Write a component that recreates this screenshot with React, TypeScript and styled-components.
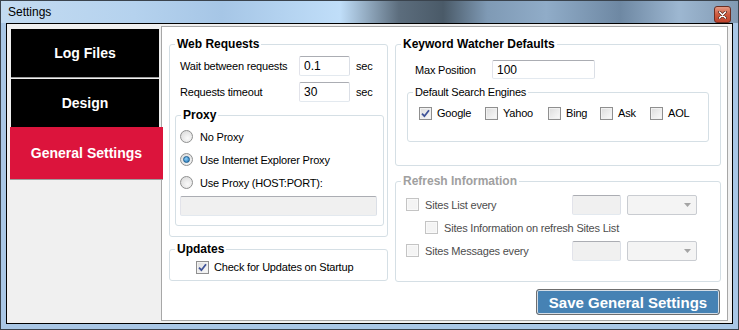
import React from "react";
import styled, { createGlobalStyle } from "styled-components";

const GlobalStyle = createGlobalStyle`
  body {
    margin: 0;
    background: #ffffff;
    font-family: "Liberation Sans", Arial, sans-serif;
  }
`;

const Window = styled.div`
  width: 739px;
  height: 330px;
  box-sizing: border-box;
  border: 1px solid #3a434d;
  background: #a9c7e6;
  padding: 0 5px 5px;
  display: flex;
  flex-direction: column;
`;

const TitleBar = styled.div`
  height: 22px;
  margin: 0 -5px;
  padding: 0 7px 0 7px;
  display: flex;
  align-items: center;
  justify-content: space-between;
  background: linear-gradient(
    90deg,
    #c3dbf1 0%,
    #b5d2ee 18%,
    #a6c6e6 30%,
    #c0def9 46%,
    #5c6d7d 54%,
    #4a5a68 60%,
    #7f9ab5 66%,
    #90acc8 74%,
    #6e88a3 84%,
    #9db7d1 92%,
    #8199b2 100%
  );
`;

const Title = styled.span`
  font-size: 12px;
  color: #000;
`;

const CloseButton = styled.div`
  width: 15px;
  height: 15px;
  align-self: flex-start;
  margin-top: 5px;
  border: 1px solid #6b2e22;
  border-radius: 3px;
  background: linear-gradient(#e59a85, #cf5a3f 50%, #c0412a);
  display: flex;
  align-items: center;
  justify-content: center;
`;

const Inner = styled.div`
  flex: 1;
  border: 1px solid #000;
  background: #f0f0f0;
  display: flex;
`;

const Nav = styled.div`
  width: 154px;
  padding-top: 5px;
  display: flex;
  flex-direction: column;
`;

const Tab = styled.div<{ $active?: boolean }>`
  position: relative;
  z-index: 1;
  margin-left: ${(p) => (p.$active ? 3 : 4)}px;
  margin-top: ${(p) => (p.$active ? -2 : 0)}px;
  width: ${(p) => (p.$active ? 153 : 148)}px;
  height: ${(p) => (p.$active ? 52 : 48)}px;
  margin-bottom: 1px;
  border-bottom: 1px solid #9d9d9d;
  background: ${(p) => (p.$active ? "#dc143c" : "#000")};
  color: #fff;
  font-weight: bold;
  font-size: 14px;
  display: flex;
  align-items: center;
  justify-content: center;
`;

const Panel = styled.div`
  margin: 2px 4px 2px 0;
  border: 1px solid #a7a7a7;
  background: #fff;
  padding: 10px 6px 0 7px;
  display: flex;
  gap: 7px;
`;

const Column = styled.div<{ $w: number }>`
  width: ${(p) => p.$w}px;
  display: flex;
  flex-direction: column;
`;

const GroupBox = styled.fieldset<{
  $h: number;
  $w?: number;
  $top?: number;
  $margin?: string;
}>`
  margin: ${(p) => p.$margin ?? "0"};
  padding: ${(p) => p.$top ?? 0}px 0 0 0;
  height: ${(p) => p.$h}px;
  width: ${(p) => (p.$w ? `${p.$w}px` : "auto")};
  box-sizing: border-box;
  min-width: 0;
  border: 1px solid #d5dfe5;
  border-radius: 3px;
`;

const Legend = styled.legend<{ $plain?: boolean; $disabled?: boolean }>`
  margin-left: 5px;
  padding: 0 2px;
  line-height: 14px;
  font-size: ${(p) => (p.$plain ? 11 : 12)}px;
  font-weight: ${(p) => (p.$plain ? "normal" : "bold")};
  letter-spacing: ${(p) => (p.$plain ? -0.2 : 0)}px;
  color: ${(p) => (p.$disabled ? "#a0a0a0" : "#000")};
`;

const FieldRow = styled.div<{ $h?: number; $mt?: number; $ml?: number; $pr?: number }>`
  height: ${(p) => p.$h ?? 20}px;
  margin-top: ${(p) => p.$mt ?? 0}px;
  padding-left: ${(p) => p.$ml ?? 0}px;
  padding-right: ${(p) => p.$pr ?? 0}px;
  display: flex;
  align-items: center;
  font-size: 11px;
  letter-spacing: -0.2px;
  color: #000;
`;

const Label = styled.span<{ $w?: number; $disabled?: boolean }>`
  width: ${(p) => (p.$w ? `${p.$w}px` : "auto")};
  flex: ${(p) => (p.$w ? "none" : "1")};
  color: ${(p) => (p.$disabled ? "#4d4d4d" : "#000")};
  white-space: nowrap;
`;

const TextBox = styled.input<{ $w: number; $h?: number }>`
  width: ${(p) => p.$w}px;
  height: ${(p) => p.$h ?? 20}px;
  box-sizing: border-box;
  margin: 0;
  padding: 0 4px;
  border: 1px solid;
  border-color: #abadb3 #dbdfe6 #e3e9ef #e2e3ea;
  border-radius: 2px;
  font-family: "Liberation Sans", Arial, sans-serif;
  font-size: 12px;
  color: #000;
  background: ${(p) => (p.disabled ? "#f0f0f0" : "#fff")};
  outline: none;
`;

const Unit = styled.span`
  margin-left: 6px;
`;

const Combo = styled.div`
  width: 70px;
  height: 20px;
  box-sizing: border-box;
  margin-left: 6px;
  border: 1px solid #c9ccd1;
  border-radius: 2px;
  background: #f4f4f4;
  display: flex;
  align-items: center;
  justify-content: flex-end;
  padding-right: 5px;
`;

const Radio = styled.span<{ $checked?: boolean }>`
  width: 13px;
  height: 13px;
  box-sizing: border-box;
  border-radius: 50%;
  border: 1px solid #8f9090;
  background: radial-gradient(circle at 60% 65%, #fafafa, #d6d6d6);
  display: flex;
  align-items: center;
  justify-content: center;
  margin-right: 7px;
  flex: none;
  &::after {
    content: "";
    display: ${(p) => (p.$checked ? "block" : "none")};
    width: 5px;
    height: 5px;
    border-radius: 50%;
    border: 1px solid #1c5d8f;
    background: radial-gradient(circle at 40% 35%, #8fd1fb, #1a6fb0);
  }
`;

const Check = styled.span<{ $disabled?: boolean; $gap?: number }>`
  width: 13px;
  height: 13px;
  box-sizing: border-box;
  border: 1px solid ${(p) => (p.$disabled ? "#c4c4c4" : "#8f8f8f")};
  background: ${(p) =>
    p.$disabled ? "#f4f4f4" : "linear-gradient(135deg, #dcdcdc, #fbfbfb)"};
  box-shadow: inset 0 0 0 1px ${(p) => (p.$disabled ? "#f9f9f9" : "#f1f1f1")};
  margin-right: ${(p) => p.$gap ?? 6}px;
  flex: none;
  display: flex;
  align-items: center;
  justify-content: center;
`;

const Engines = styled.div`
  padding: 4px 0 0 11px;
  display: flex;
`;

const Engine = styled.div<{ $w: number }>`
  width: ${(p) => p.$w}px;
  height: 20px;
  display: flex;
  align-items: center;
  font-size: 11px;
  letter-spacing: -0.2px;
`;

const SaveButton = styled.button`
  align-self: flex-end;
  margin: 7px 1px 0 0;
  width: 184px;
  height: 26px;
  box-sizing: border-box;
  border: 1px solid #6e6e6e;
  border-radius: 3px;
  background: #4682b4;
  box-shadow: inset 0 0 0 1px #d4dde6;
  color: #fff;
  font-family: "Liberation Sans", Arial, sans-serif;
  font-weight: bold;
  font-size: 15px;
  padding: 0;
`;

const CheckMark = () => (
  <svg width="9" height="9" viewBox="0 0 9 9">
    <path d="M1 4.6 L3.4 7.2 L8 1.2" fill="none" stroke="#3f5398" strokeWidth="1.8" />
  </svg>
);

const CloseGlyph = () => (
  <svg width="9" height="8" viewBox="0 0 9 8">
    <path d="M1.5 1 L7.5 7 M7.5 1 L1.5 7" stroke="#5a2318" strokeWidth="3" strokeLinecap="round" />
    <path d="M1.5 1 L7.5 7 M7.5 1 L1.5 7" stroke="#ffffff" strokeWidth="1.6" strokeLinecap="round" />
  </svg>
);

const ComboArrow = () => (
  <svg width="7" height="4" viewBox="0 0 7 4">
    <path d="M0 0 H7 L3.5 4 Z" fill="#a4a4a4" />
  </svg>
);

const engines = [
  { name: "Google", w: 66, checked: true },
  { name: "Yahoo", w: 63 },
  { name: "Bing", w: 52 },
  { name: "Ask", w: 50 },
  { name: "AOL", w: 50 },
];

const App = () => {
  return (
    <>
      <GlobalStyle />
      <Window>
        <TitleBar>
          <Title>Settings</Title>
          <CloseButton>
            <CloseGlyph />
          </CloseButton>
        </TitleBar>
        <Inner>
          <Nav>
            <Tab>Log Files</Tab>
            <Tab>Design</Tab>
            <Tab $active>General Settings</Tab>
          </Nav>
          <Panel>
            <Column $w={219}>
              <GroupBox $h={200} $top={5}>
                <Legend>Web Requests</Legend>
                <FieldRow $ml={10}>
                  <Label $w={119}>Wait between requests</Label>
                  <TextBox $w={51} defaultValue="0.1" readOnly />
                  <Unit>sec</Unit>
                </FieldRow>
                <FieldRow $ml={10} $mt={6}>
                  <Label $w={119}>Requests timeout</Label>
                  <TextBox $w={51} defaultValue="30" readOnly />
                  <Unit>sec</Unit>
                </FieldRow>
                <GroupBox $h={118} $w={209} $top={3} $margin="6px 0 0 5px">
                  <Legend>Proxy</Legend>
                  <FieldRow $h={23} $ml={4}>
                    <Radio />
                    <Label>No Proxy</Label>
                  </FieldRow>
                  <FieldRow $h={23} $ml={4}>
                    <Radio $checked />
                    <Label>Use Internet Explorer Proxy</Label>
                  </FieldRow>
                  <FieldRow $h={23} $ml={4}>
                    <Radio />
                    <Label>Use Proxy (HOST:PORT):</Label>
                  </FieldRow>
                  <FieldRow $ml={4} $mt={2}>
                    <TextBox $w={197} disabled />
                  </FieldRow>
                </GroupBox>
              </GroupBox>
              <GroupBox $h={39} $top={1} $margin="5px 0 0 0">
                <Legend>Updates</Legend>
                <FieldRow $ml={26}>
                  <Check $gap={5}>
                    <CheckMark />
                  </Check>
                  <Label>Check for Updates on Startup</Label>
                </FieldRow>
              </GroupBox>
            </Column>

            <Column $w={326}>
              <GroupBox $h={129} $top={9}>
                <Legend>Keyword Watcher Defaults</Legend>
                <FieldRow $h={19} $ml={19}>
                  <Label $w={77}>Max Position</Label>
                  <TextBox $w={103} $h={19} defaultValue="100" readOnly />
                </FieldRow>
                <GroupBox $h={57} $w={302} $margin="6px 0 0 11px">
                  <Legend $plain>Default Search Engines</Legend>
                  <Engines>
                    {engines.map((e) => (
                      <Engine key={e.name} $w={e.w}>
                        <Check $gap={5}>{e.checked && <CheckMark />}</Check>
                        {e.name}
                      </Engine>
                    ))}
                  </Engines>
                </GroupBox>
              </GroupBox>

              <GroupBox $h={108} $top={5} $margin="8px 0 0 0">
                <Legend $disabled>Refresh Information</Legend>
                <FieldRow $h={23} $ml={10} $pr={23}>
                  <Check $disabled />
                  <Label $disabled>Sites List every</Label>
                  <TextBox $w={49} disabled />
                  <Combo>
                    <ComboArrow />
                  </Combo>
                </FieldRow>
                <FieldRow $h={23} $ml={29}>
                  <Check $disabled />
                  <Label $disabled>Sites Information on refresh Sites List</Label>
                </FieldRow>
                <FieldRow $h={23} $ml={10} $pr={23}>
                  <Check $disabled />
                  <Label $disabled>Sites Messages every</Label>
                  <TextBox $w={49} disabled />
                  <Combo>
                    <ComboArrow />
                  </Combo>
                </FieldRow>
              </GroupBox>

              <SaveButton>Save General Settings</SaveButton>
            </Column>
          </Panel>
        </Inner>
      </Window>
    </>
  );
};

export default App;
